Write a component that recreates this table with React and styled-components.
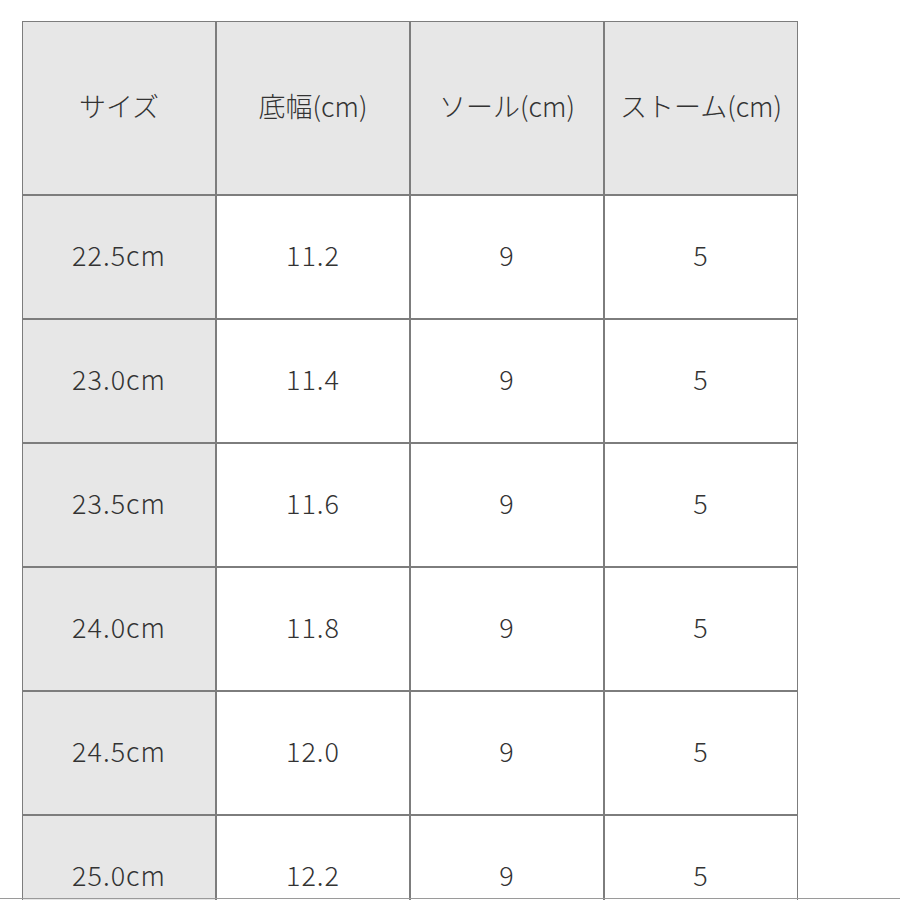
import styled, { createGlobalStyle } from "styled-components";

const GlobalStyle = createGlobalStyle`
  html, body {
    margin: 0;
    padding: 0;
    background: #ffffff;
    overflow: hidden;
  }
  body {
    font-family: "Noto Sans CJK JP", "Noto Sans", sans-serif;
    color: #333333;
  }
`;

const headers = ["サイズ", "底幅(cm)", "ソール(cm)", "ストーム(cm)"];

const rows = [
  ["22.5cm", "11.2", "9", "5"],
  ["23.0cm", "11.4", "9", "5"],
  ["23.5cm", "11.6", "9", "5"],
  ["24.0cm", "11.8", "9", "5"],
  ["24.5cm", "12.0", "9", "5"],
  ["25.0cm", "12.2", "9", "5"],
];

const App = () => {
  return (
    <Page>
      <GlobalStyle />
      <SizeTable>
        {headers.map((h) => (
          <Cell key={h} $shaded $header>
            {h}
          </Cell>
        ))}
        {rows.map((row) =>
          row.map((value, i) => (
            <Cell key={row[0] + i} $shaded={i === 0}>
              {value}
            </Cell>
          ))
        )}
      </SizeTable>
      <BottomEdge />
    </Page>
  );
};

export default App;

const Page = styled.div`
  width: 900px;
  height: 900px;
  padding: 21px 0 0 22px;
  box-sizing: border-box;
`;

const SizeTable = styled.div`
  display: grid;
  grid-template-columns: repeat(4, 192px);
  grid-template-rows: 172px;
  grid-auto-rows: 122px;
  gap: 2px;
  padding: 1px;
  width: max-content;
  background: #7d7d7d;
`;

const Cell = styled.div`
  display: flex;
  align-items: center;
  justify-content: center;
  padding-bottom: 5px;
  box-sizing: border-box;
  background: ${(p) => (p.$shaded ? "#e7e7e7" : "#ffffff")};
  font-size: 27px;
  font-weight: 300;
  letter-spacing: ${(p) => (p.$header ? "0" : "1px")};
  color: #333333;
  white-space: nowrap;
`;

const BottomEdge = styled.div`
  position: fixed;
  left: 0;
  right: 0;
  top: 898px;
  height: 1px;
  background: #9a9a9a;
`;
